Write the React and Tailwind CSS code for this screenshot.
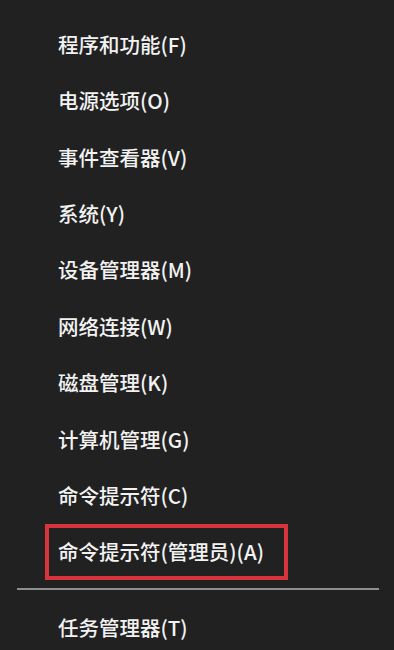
const items = [
  '程序和功能(F)',
  '电源选项(O)',
  '事件查看器(V)',
  '系统(Y)',
  '设备管理器(M)',
  '网络连接(W)',
  '磁盘管理(K)',
  '计算机管理(G)',
  '命令提示符(C)',
];

export default function App() {
  return (
    <div
      className="w-[394px] h-[650px] overflow-hidden bg-[#212121] text-[#f2f2f2] text-[20.5px] font-medium pt-[16px]"
      style={{ fontFamily: '"Noto Sans CJK SC", "Noto Sans", sans-serif' }}
    >
      {items.map((label) => (
        <div key={label} className="h-[56.4px] flex items-center pl-[58px]">
          {label}
        </div>
      ))}

      {/* highlighted entry */}
      <div className="h-[56.4px] flex items-center">
        <div className="ml-[45px] w-[243px] h-[56px] border-4 border-[#d8343c] flex items-center pl-[9px]">
          命令提示符(管理员)(A)
        </div>
      </div>

      <div className="mt-[8px] ml-[17px] w-[362px] h-[2px] bg-[#8e8e8e]" />

      <div className="mt-[9px] h-[56px] flex items-center pl-[58px]">任务管理器(T)</div>
    </div>
  );
}
